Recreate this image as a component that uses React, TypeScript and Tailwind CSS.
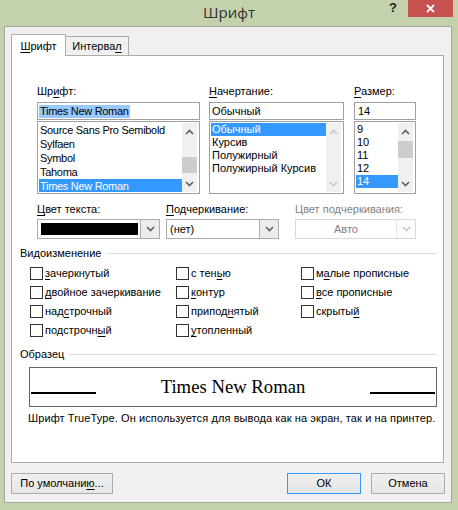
import { ReactNode } from "react";

const Chevron = ({ up = false, light = false }: { up?: boolean; light?: boolean }) => (
  <svg width="9" height="6" viewBox="0 0 9 6" className="block">
    <path
      d={up ? "M1 5 L4.5 1.5 L8 5" : "M1 1 L4.5 4.5 L8 1"}
      fill="none"
      stroke={light ? "#c8c8c8" : "#606060"}
      strokeWidth="1.6"
    />
  </svg>
);

// access key underline
const U = ({ children }: { children: ReactNode }) => (
  <span className="underline underline-offset-[2px]">{children}</span>
);

const Scrollbar = ({ thumbTop, thumbH, disabled = false }: { thumbTop?: number; thumbH?: number; disabled?: boolean }) => (
  <div className="flex flex-col w-[15px] h-full bg-[#f0f0f0] shrink-0">
    <div className="h-[17px] flex items-center justify-center shrink-0">
      <Chevron up light={disabled} />
    </div>
    <div className="flex-1">
      {!disabled && thumbTop !== undefined && (
        <div className="bg-[#cdcdcd] w-full" style={{ marginTop: thumbTop, height: thumbH }} />
      )}
    </div>
    <div className="h-[17px] flex items-center justify-center shrink-0">
      <Chevron light={disabled} />
    </div>
  </div>
);

const ListBox = ({
  items,
  selected,
  itemH,
  thumbTop,
  thumbH,
  disabled = false,
  tight = false,
}: {
  items: string[];
  selected: number;
  itemH: number;
  thumbTop?: number;
  thumbH?: number;
  disabled?: boolean;
  tight?: boolean;
}) => (
  <div className="mt-[1px] h-[73px] border border-[#a0a0a0] bg-white p-[1px] pr-[2px] flex">
    <div className={`flex-1 flex flex-col overflow-hidden ${tight ? "tracking-[-0.3px]" : ""}`}>
      {items.map((it, i) => (
        <div
          key={it}
          className={`pl-[1px] whitespace-nowrap ${i === selected ? "bg-[#3399ff] text-white" : "text-black"}`}
          style={{ height: itemH, lineHeight: `${itemH}px` }}
        >
          {it}
        </div>
      ))}
    </div>
    <Scrollbar thumbTop={thumbTop} thumbH={thumbH} disabled={disabled} />
  </div>
);

const Combo = ({ children, disabled = false, center = false }: { children: ReactNode; disabled?: boolean; center?: boolean }) => (
  <div
    className={`h-[20px] flex border bg-white ${disabled ? "border-[#d9d9d9]" : "border-[#acacac]"}`}
  >
    <div className={`flex-1 flex items-center ${center ? "justify-center text-[#838383]" : "pl-[3px]"}`}>{children}</div>
    <div
      className={`w-[19px] flex items-center justify-center border-l ${
        disabled ? "border-[#e5e5e5] bg-[#fcfcfc]" : "border-[#acacac] bg-[#ececec]"
      }`}
    >
      <Chevron light={disabled} />
    </div>
  </div>
);

const Check = ({ children }: { children: ReactNode }) => (
  <div className="h-[19px] flex items-center">
    <div className="w-[13px] h-[13px] border border-[#333333] bg-white shrink-0" />
    <span className="ml-[2px] whitespace-nowrap">{children}</span>
  </div>
);

const Legend = ({ children }: { children: ReactNode }) => (
  <div className="h-[13px] leading-[13px] flex items-center pl-[8px] pr-[6px]">
    <span>{children}</span>
    <div className="flex-1 h-px bg-[#dcdcdc] ml-[5px]" />
  </div>
);

const Label = ({ children, gray = false }: { children: ReactNode; gray?: boolean }) => (
  <div className={`h-[13px] leading-[13px] whitespace-nowrap ${gray ? "text-[#838383]" : "text-black"}`}>{children}</div>
);

const Button = ({ children, w, focused = false }: { children: ReactNode; w: string; focused?: boolean }) => (
  <div
    className={`${w} h-[21px] flex items-center justify-center border bg-gradient-to-b from-[#f0f0f0] to-[#e5e5e5] ${
      focused ? "border-[#3399ff]" : "border-[#acacac]"
    }`}
  >
    {children}
  </div>
);

export default function App() {
  return (
    <div className="w-[458px] h-[510px] bg-[#c4d1ad] font-['Liberation_Sans',Arial,sans-serif] text-[11px] text-black flex flex-col overflow-hidden">
      {/* title bar */}
      <div className="h-[26px] grid grid-cols-[1fr_auto_1fr] shrink-0">
        <div />
        <div className="text-[15px] leading-[24px] text-[#333333] font-['Open_Sans',sans-serif]">Шрифт</div>
        <div className="flex justify-end items-start">
          <span className="text-[13px] font-bold text-[#222222] leading-[14px] mt-[1px] mr-[11px]">?</span>
          <div className="w-[45px] h-[17px] bg-[#c75050] flex items-center justify-center mr-[5px]">
            <svg width="9" height="9" viewBox="0 0 9 9">
              <path d="M1 1 L8 8 M8 1 L1 8" stroke="white" strokeWidth="1.8" />
            </svg>
          </div>
        </div>
      </div>

      {/* client area */}
      <div className="ml-[4px] w-[448px] h-[477px] bg-[#f0f0f0] border border-[#a3ab98] pt-[7px] pl-[6px] shrink-0">
        {/* tabs */}
        <div className="flex items-end h-[22px] mb-[-1px]">
          <div className="relative z-10 w-[55px] h-[22px] bg-white border border-b-0 border-[#acacac] flex items-center justify-center pt-[1px]">
            <U>Ш</U>рифт
          </div>
          <div className="w-[63px] h-[20px] bg-[#f0f0f0] border border-l-0 border-[#acacac] flex items-center justify-center">
            Интерва<U>л</U>
          </div>
        </div>

        {/* tab panel */}
        <div className="w-[433px] h-[408px] bg-white border border-[#acacac]">
          <div className="pt-[29px] pl-[25px] flex">
            <div className="w-[163px]">
              <Label>
                Шр<U>и</U>фт:
              </Label>
              <div className="mt-[4px] h-[18px] border border-[#a0a0a0] flex items-center pl-[1px]">
                <span className="bg-[#99c9ff] leading-[13px] px-[1px] tracking-[-0.3px]">Times New Roman</span>
              </div>
              <ListBox
                items={["Source Sans Pro Semibold", "Sylfaen", "Symbol", "Tahoma", "Times New Roman"]}
                selected={4}
                itemH={14}
                thumbTop={17}
                thumbH={16}
                tight
              />
            </div>
            <div className="w-[135px] ml-[9px]">
              <Label>
                <U>Н</U>ачертание:
              </Label>
              <div className="mt-[4px] h-[18px] border border-[#a0a0a0] flex items-center pl-[2px]">Обычный</div>
              <ListBox items={["Обычный", "Курсив", "Полужирный", "Полужирный Курсив"]} selected={0} itemH={13} disabled />
            </div>
            <div className="w-[62px] ml-[10px]">
              <Label>
                <U>Р</U>азмер:
              </Label>
              <div className="mt-[4px] h-[18px] border border-[#a0a0a0] flex items-center pl-[3px]">14</div>
              <ListBox items={["9", "10", "11", "12", "14"]} selected={4} itemH={13} thumbTop={1} thumbH={17} />
            </div>
          </div>

          {/* colour / underline row */}
          <div className="mt-[9px] pl-[25px] flex">
            <div className="w-[123px]">
              <Label>
                <U>Ц</U>вет текста:
              </Label>
              <div className="mt-[3px]">
                <Combo>
                  <div className="w-[97px] h-[12px] bg-black" />
                </Combo>
              </div>
            </div>
            <div className="w-[113px] ml-[6px]">
              <Label>
                <U>П</U>одчеркивание:
              </Label>
              <div className="mt-[3px]">
                <Combo>(нет)</Combo>
              </div>
            </div>
            <div className="w-[121px] ml-[16px]">
              <Label gray>Цвет подчеркивания:</Label>
              <div className="mt-[3px]">
                <Combo disabled center>
                  Авто
                </Combo>
              </div>
            </div>
          </div>

          {/* effects */}
          <div className="mt-[8px]">
            <Legend>Видоизменение</Legend>
          </div>
          <div className="mt-[4px] pl-[18px] grid grid-cols-[146px_125px_auto]">
            <Check>
              <U>з</U>ачеркнутый
            </Check>
            <Check>
              с тен<U>ь</U>ю
            </Check>
            <Check>
              м<U>а</U>лые прописные
            </Check>
            <Check>
              <U>д</U>войное зачеркивание
            </Check>
            <Check>
              <U>к</U>онтур
            </Check>
            <Check>
              <U>в</U>се прописные
            </Check>
            <Check>
              над<U>с</U>трочный
            </Check>
            <Check>
              припод<U>н</U>ятый
            </Check>
            <Check>
              скрыты<U>й</U>
            </Check>
            <Check>
              подстрочн<U>ы</U>й
            </Check>
            <Check>
              <U>у</U>топленный
            </Check>
          </div>

          {/* sample */}
          <div className="mt-[8px]">
            <Legend>Образец</Legend>
          </div>
          <div className="mt-[6px] ml-[17px] w-[408px] h-[40px] border border-[#646464] flex items-center justify-between px-[1px]">
            <div className="w-[65px] h-[1.5px] bg-black mt-[12px]" />
            <span className="font-['Liberation_Serif',serif] text-[18.7px] leading-[22px]">Times New Roman</span>
            <div className="w-[65px] h-[1.5px] bg-black mt-[12px]" />
          </div>
          <div className="mt-[5px] ml-[16px] h-[13px] leading-[13px] whitespace-nowrap tracking-[0.1px]">
            Шрифт TrueType. Он используется для вывода как на экран, так и на принтер.
          </div>
        </div>

        {/* buttons */}
        <div className="mt-[10px] flex">
          <Button w="w-[102px]">
            По умолчани<U>ю</U>...
          </Button>
          <div className="ml-[174px]">
            <Button w="w-[74px]" focused>
              ОК
            </Button>
          </div>
          <div className="ml-[10px]">
            <Button w="w-[74px]">Отмена</Button>
          </div>
        </div>
      </div>
    </div>
  );
}
